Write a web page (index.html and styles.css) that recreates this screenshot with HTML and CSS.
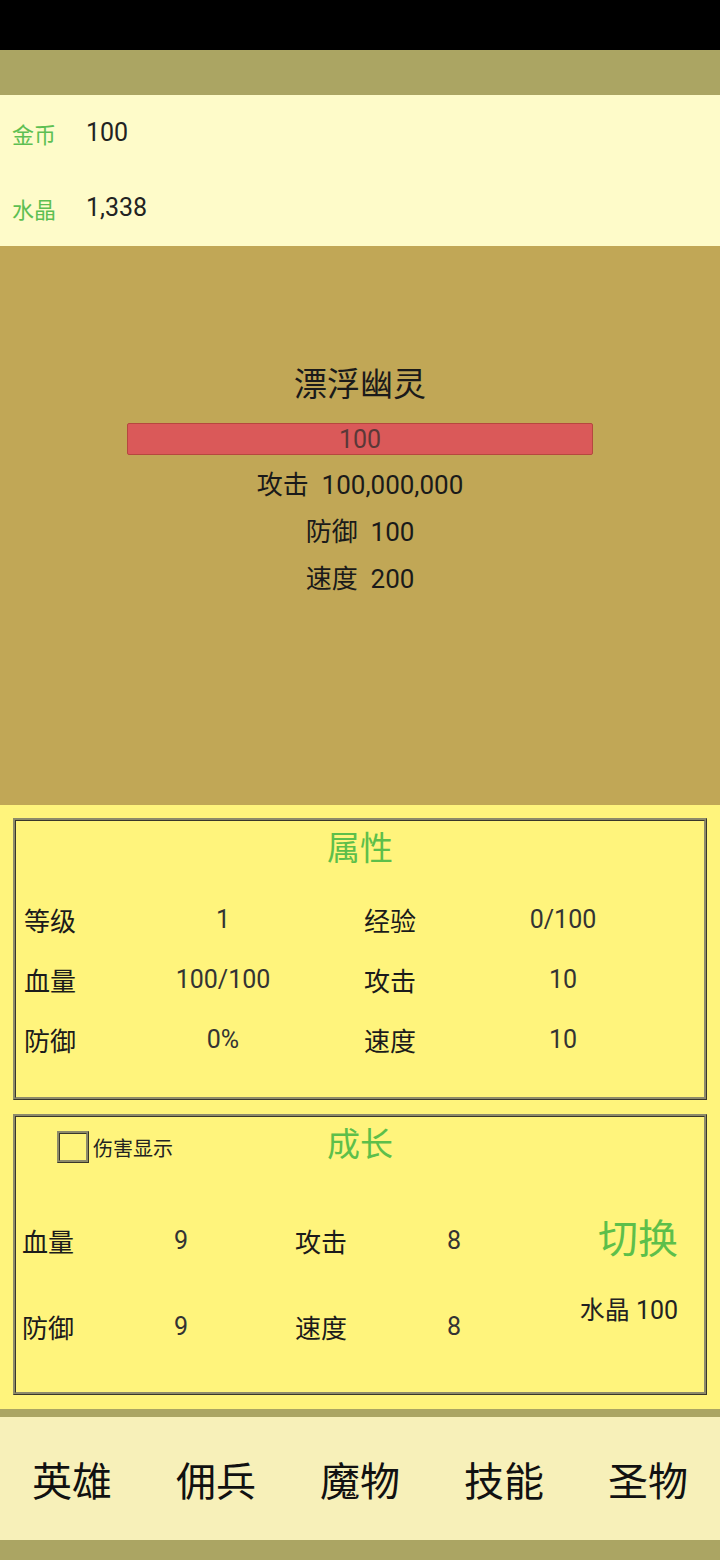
FILE: index.html
```html
<!DOCTYPE html>
<html lang="zh-CN">
<head>
<meta charset="utf-8">
<title>游戏</title>
<link rel="stylesheet" href="styles.css">
</head>
<body>
<div class="app">
  <div class="statusbar"></div>
  <div class="topband"></div>
  <section class="resources">
    <div class="res-row"><span class="res-label">金币</span><span class="res-value">100</span></div>
    <div class="res-row"><span class="res-label">水晶</span><span class="res-value">1,338</span></div>
  </section>
  <section class="monster">
    <div class="m-name">漂浮幽灵</div>
    <div class="hpbar">100</div>
    <div class="m-stat">攻击&nbsp;&nbsp;100,000,000</div>
    <div class="m-stat">防御&nbsp;&nbsp;100</div>
    <div class="m-stat">速度&nbsp;&nbsp;200</div>
  </section>
  <section class="panels">
    <div class="panel attr">
      <div class="panel-title">属性</div>
      <div class="attr-grid">
        <div class="pair"><span class="lbl">等级</span><span class="val">1</span></div>
        <div class="pair"><span class="lbl">经验</span><span class="val">0/100</span></div>
        <div class="pair"><span class="lbl">血量</span><span class="val">100/100</span></div>
        <div class="pair"><span class="lbl">攻击</span><span class="val">10</span></div>
        <div class="pair"><span class="lbl">防御</span><span class="val">0%</span></div>
        <div class="pair"><span class="lbl">速度</span><span class="val">10</span></div>
      </div>
    </div>
    <div class="panel growth">
      <div class="growth-head">
        <label class="dmg"><span class="checkbox"></span><span class="dmg-text">伤害显示</span></label>
        <div class="panel-title">成长</div>
        <div></div>
      </div>
      <div class="growth-body">
        <div class="growth-grid">
          <div class="gpair"><span class="glbl">血量</span><span class="gval">9</span></div>
          <div class="gpair"><span class="glbl">攻击</span><span class="gval">8</span></div>
          <div class="gpair"><span class="glbl">防御</span><span class="gval">9</span></div>
          <div class="gpair"><span class="glbl">速度</span><span class="gval">8</span></div>
        </div>
        <div class="switch-col">
          <div class="switch">切换</div>
          <div class="cost">水晶 100</div>
        </div>
      </div>
    </div>
  </section>
  <div class="navline"></div>
  <nav class="nav">
    <span>英雄</span><span>佣兵</span><span>魔物</span><span>技能</span><span>圣物</span>
  </nav>
  <div class="bottomband"></div>
</div>
</body>
</html>
```
FILE: styles.css
```css
* { box-sizing: border-box; }
html, body { margin: 0; padding: 0; }
body {
  width: 720px;
  height: 1560px;
  font-family: Roboto, "Noto Sans CJK SC", sans-serif;
  color: #1b1b1b;
  background: #aba563;
  overflow: hidden;
}
.app { display: flex; flex-direction: column; width: 720px; height: 1560px; }
.statusbar { height: 50px; background: #000; }
.topband { height: 45px; background: #aba563; }

.resources { height: 151px; background: #fefbc9; display: flex; flex-direction: column; }
.res-row { height: 75px; display: flex; align-items: center; padding-left: 12px; }
.res-label { width: 74px; font-size: 22px; color: #5dbf52; }
.res-value { font-size: 25px; color: #222; }

.monster {
  height: 559px;
  background: #c1a756;
  display: flex;
  flex-direction: column;
  align-items: center;
  padding-top: 119px;
}
.m-name { font-size: 33px; line-height: 40px; height: 40px; color: #1a1a1a; }
.hpbar {
  margin-top: 18px;
  width: 466px;
  height: 32px;
  background: #da5959;
  border: 1px solid #b6473f;
  border-radius: 2px;
  text-align: center;
  font-size: 25px;
  line-height: 31px;
  color: #5a3838;
  margin-bottom: 7px;
}
.m-stat { font-size: 26px; line-height: 47px; height: 47px; color: #1a1a1a; }

.panels {
  height: 604px;
  background: #fff47c;
  padding: 13px 13px 0 13px;
  display: flex;
  flex-direction: column;
  gap: 14px;
}
.panel {
  border: 3px ridge #8d8a6a;
  display: flex;
  flex-direction: column;
}
.panel.attr { height: 282px; }
.panel.growth { height: 281px; }
.panel-title {
  margin-top: 6px;
  height: 44px;
  line-height: 44px;
  text-align: center;
  font-size: 33px;
  color: #5dbf4a;
}
.attr-grid {
  margin-top: 18px;
  padding-left: 8px;
  display: grid;
  grid-template-columns: 340px 340px;
  grid-auto-rows: 60px;
}
.pair { display: flex; align-items: center; font-size: 25px; }
.lbl { width: 120px; color: #1b1b1b; font-size: 26px; }
.val { width: 158px; text-align: center; color: #333; }

.growth-head {
  display: grid;
  grid-template-columns: 1fr auto 1fr;
  align-items: center;
  margin-top: 6px;
}
.growth-head .panel-title { margin-top: 0; }
.dmg { display: flex; align-items: center; padding-left: 41px; }
.checkbox {
  width: 32px;
  height: 32px;
  border: 3px ridge #8d8a6a;
  background: #fff47c;
  margin-top: 4px;
}
.dmg-text { font-size: 20px; margin-left: 4px; margin-top: 4px; color: #222; }

.growth-body {
  display: flex;
  margin-top: 30px;
}
.growth-grid {
  padding-left: 6px;
  display: grid;
  grid-template-columns: 273px 273px;
  grid-auto-rows: 86px;
}
.gpair { display: flex; align-items: center; font-size: 25px; }
.glbl { width: 100px; font-size: 26px; }
.gval { width: 118px; text-align: center; color: #333; }
.switch-col {
  flex: 1;
  display: flex;
  flex-direction: column;
  align-items: center;
}
.switch {
  height: 86px;
  line-height: 86px;
  font-size: 40px;
  color: #5dbf4a;
  padding-left: 4px;
}
.cost {
  margin-top: 13px;
  margin-right: 14px;
  font-size: 25px;
  line-height: 30px;
  color: #222;
}

.navline { height: 8px; background: #aba563; }
.nav {
  height: 123px;
  background: #f7f0b9;
  display: grid;
  grid-template-columns: repeat(5, 1fr);
  align-items: center;
  justify-items: center;
  font-size: 40px;
  color: #111;
}
.bottomband { height: 20px; background: #aba563; }
```
